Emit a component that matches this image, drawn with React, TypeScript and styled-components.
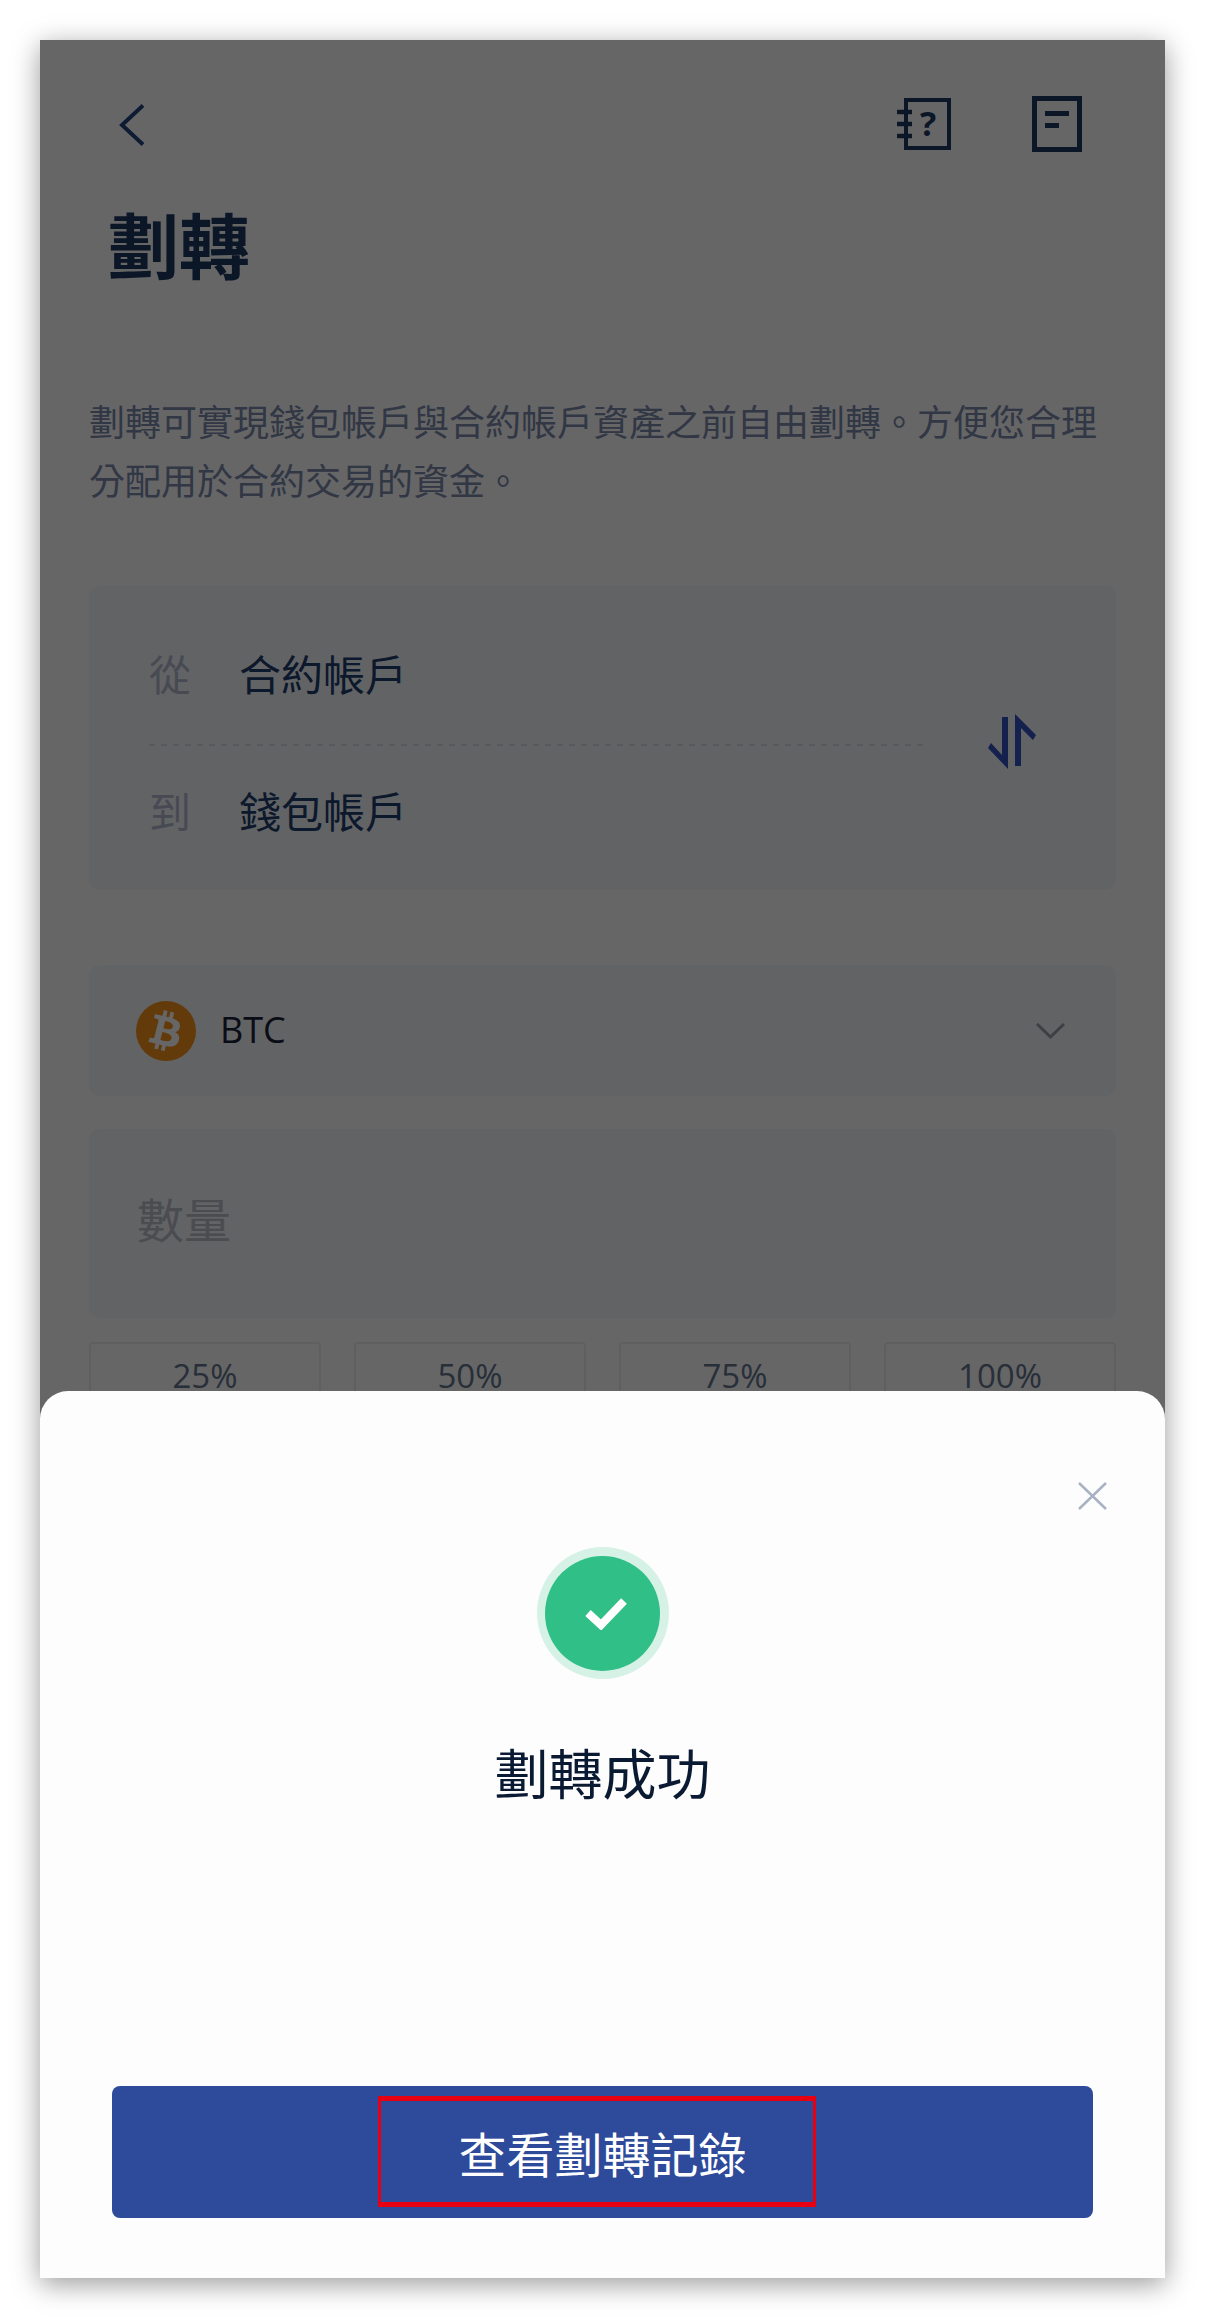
import React from "react";
import styled, { createGlobalStyle } from "styled-components";
import { FaBtc } from "react-icons/fa";

const Global = createGlobalStyle`
  html, body { margin: 0; padding: 0; background: #fff; }
  body { font-family: "Open Sans", "Noto Sans CJK TC", sans-serif; }
`;

const Stage = styled.div`
  width: 1205px;
  height: 2318px;
  padding: 40px;
  box-sizing: border-box;
`;

const Phone = styled.div`
  position: relative;
  height: 2238px;
  background: #fff;
  overflow: hidden;
  padding: 0 49px;
`;

const Shadowed = styled.div`
  box-shadow: 0 6px 26px rgba(0, 0, 0, 0.4);
`;

const TopBar = styled.header`
  display: flex;
  align-items: center;
  justify-content: space-between;
  height: 56px;
  padding: 56px 34px 0 30px;
`;

const BarActions = styled.div`
  display: flex;
  align-items: center;
  gap: 81px;
`;

const PageTitle = styled.h1`
  margin: 48px 0 0 19px;
  font-size: 71px;
  line-height: 84px;
  font-weight: 700;
  color: #1c3763;
  font-family: "Noto Sans CJK TC", sans-serif;
`;

const Intro = styled.p`
  margin: 107px 0 0;
  font-size: 36px;
  line-height: 59px;
  color: #7b89ab;
  font-family: "Noto Sans CJK TC", sans-serif;
`;

const AccountCard = styled.section`
  display: flex;
  align-items: center;
  margin-top: 77px;
  height: 304px;
  box-sizing: border-box;
  background: #f5f7fc;
  border-radius: 10px;
  padding: 6px 80px 0 60px;
`;

const Accounts = styled.div`
  flex: 1;
  margin-right: 65px;
`;

const AccountRow = styled.div`
  display: flex;
  align-items: center;
  gap: 48px;
  height: 68px;
  font-size: 42px;
  font-family: "Noto Sans CJK TC", sans-serif;
`;

const RowDivider = styled.div`
  height: 2px;
  background: repeating-linear-gradient(90deg, #dcdfe6 0 6px, transparent 6px 12px);
  margin: 37px 0 30px;
`;

const RowLabel = styled.span`
  color: #b3b9d0;
`;

const RowValue = styled.span`
  color: #1f3d6c;
`;

const CoinCard = styled.section`
  display: flex;
  align-items: center;
  margin-top: 75px;
  height: 131px;
  background: #f5f7fc;
  border-radius: 10px;
  padding: 0 51px 0 47px;
`;

const CoinBadge = styled.span`
  display: flex;
  align-items: center;
  justify-content: center;
  width: 60px;
  height: 60px;
  border-radius: 50%;
  background: #f7931a;
  color: #fff;
  font-size: 40px;

  svg {
    transform: rotate(14deg);
  }
`;

const CoinName = styled.span`
  flex: 1;
  margin: -2px 0 0 24px;
  font-size: 36px;
  color: #1a2238;
`;

const AmountCard = styled.section`
  display: flex;
  align-items: center;
  margin-top: 33px;
  height: 189px;
  box-sizing: border-box;
  background: #f5f7fc;
  border-radius: 10px;
  padding: 0 49px 12px 48px;
  font-size: 47px;
  color: #b8bdc8;
  font-family: "Noto Sans CJK TC", sans-serif;
`;

const PercentRow = styled.div`
  display: grid;
  grid-template-columns: repeat(4, 232px);
  justify-content: space-between;
  margin-top: 24px;
`;

const PercentButton = styled.div`
  height: 90px;
  box-sizing: border-box;
  border: 2px solid #eceef3;
  border-radius: 4px;
  text-align: center;
  font-size: 33px;
  line-height: 64px;
  color: #64758f;
`;

const Scrim = styled.div`
  position: absolute;
  inset: 0;
  background: rgba(0, 0, 0, 0.6);
`;

const Sheet = styled.div`
  position: absolute;
  left: 0;
  right: 0;
  bottom: 0;
  height: 887px;
  box-sizing: border-box;
  background: #fdfdfd;
  border-radius: 28px 28px 0 0;
  display: flex;
  flex-direction: column;
  align-items: center;
  padding-top: 91px;
`;

const CloseRow = styled.div`
  align-self: stretch;
  display: flex;
  justify-content: flex-end;
  padding-right: 58px;
  height: 28px;
`;

const StatusHalo = styled.div`
  display: flex;
  align-items: center;
  justify-content: center;
  width: 132px;
  height: 132px;
  margin-top: 37px;
  border-radius: 50%;
  background: #d6f2e7;
`;

const StatusDisc = styled.div`
  display: flex;
  align-items: center;
  justify-content: center;
  width: 115px;
  height: 115px;
  box-sizing: border-box;
  padding-left: 6px;
  border-radius: 50%;
  background: #30bf87;
`;

const SheetTitle = styled.h2`
  margin: 57px 0 0;
  font-size: 54px;
  line-height: 72px;
  font-weight: 400;
  color: #0b1a33;
  font-family: "Noto Sans CJK TC", sans-serif;
`;

const RecordButton = styled.button`
  display: flex;
  align-items: center;
  justify-content: center;
  position: relative;
  width: 981px;
  height: 132px;
  margin-top: auto;
  margin-bottom: 60px;
  border: 0;
  border-radius: 8px;
  background: #2d4a9b;
  color: #fff;
  font-size: 48px;
  font-family: "Noto Sans CJK TC", sans-serif;
`;

const Highlight = styled.span`
  position: absolute;
  left: 266px;
  top: 10px;
  width: 438px;
  height: 111px;
  box-sizing: border-box;
  border: solid #e60012;
  border-width: 5px 3px 5px 3px;
`;

const BackIcon = styled.svg`
  margin-top: 2px;
`;

const GuideIcon = () => (
  <svg width="54" height="52" viewBox="0 0 54 52" fill="none">
    <rect x="9" y="2" width="43" height="48" stroke="#1c3763" strokeWidth="4" />
    <path d="M0 14h15M0 26h15M0 38h15" stroke="#1c3763" strokeWidth="4.5" />
    <text x="31" y="38" textAnchor="middle" fontFamily="Open Sans" fontWeight="700" fontSize="34" fill="#1c3763">?</text>
  </svg>
);

const RecordIcon = () => (
  <svg width="50" height="56" viewBox="0 0 50 56" fill="none">
    <rect x="2.5" y="2.5" width="45" height="51" stroke="#1c3763" strokeWidth="5" />
    <path d="M13 17.5h24M13 29.5h14" stroke="#1c3763" strokeWidth="5" />
  </svg>
);

const SwapIcon = () => (
  <svg width="48" height="55" viewBox="0 0 48 55" fill="#3451c4">
    <polygon points="14,3 20,3 20,55 0,34 3,29 14,41" />
    <polygon points="27,52 33,52 33,14 45,26 48,21 27,0" />
  </svg>
);

const ChevronIcon = () => (
  <svg width="29" height="16" viewBox="0 0 29 16" fill="none">
    <path d="M1 1l13.5 13L28 1" stroke="#9a9fab" strokeWidth="3" />
  </svg>
);

const CloseIcon = () => (
  <svg width="29" height="28" viewBox="0 0 29 28" fill="none">
    <path d="M1 1l27 26M28 1 1 27" stroke="#a9b2c4" strokeWidth="2.5" />
  </svg>
);

const CheckIcon = () => (
  <svg width="42" height="33" viewBox="0 0 42 33" fill="none">
    <path d="M3 16l13 12L39 4" stroke="#fff" strokeWidth="8" />
  </svg>
);

export default function App() {
  return (
    <>
      <Global />
      <Stage>
        <Shadowed>
          <Phone>
            <TopBar>
              <BackIcon width="25" height="42" viewBox="0 0 25 42" fill="none">
                <path d="M24 1.5 3 21l21 19.5" stroke="#25477f" strokeWidth="4" />
              </BackIcon>
              <BarActions>
                <GuideIcon />
                <RecordIcon />
              </BarActions>
            </TopBar>
            <PageTitle>劃轉</PageTitle>
            <Intro>
              劃轉可實現錢包帳戶與合約帳戶資產之前自由劃轉。方便您合理分配用於合約交易的資金。
            </Intro>
            <AccountCard>
              <Accounts>
                <AccountRow>
                  <RowLabel>從</RowLabel>
                  <RowValue>合約帳戶</RowValue>
                </AccountRow>
                <RowDivider />
                <AccountRow>
                  <RowLabel>到</RowLabel>
                  <RowValue>錢包帳戶</RowValue>
                </AccountRow>
              </Accounts>
              <SwapIcon />
            </AccountCard>
            <CoinCard>
              <CoinBadge>
                <FaBtc />
              </CoinBadge>
              <CoinName>BTC</CoinName>
              <ChevronIcon />
            </CoinCard>
            <AmountCard>數量</AmountCard>
            <PercentRow>
              {["25%", "50%", "75%", "100%"].map((p) => (
                <PercentButton key={p}>{p}</PercentButton>
              ))}
            </PercentRow>
            <Scrim />
            <Sheet>
              <CloseRow>
                <CloseIcon />
              </CloseRow>
              <StatusHalo>
                <StatusDisc>
                  <CheckIcon />
                </StatusDisc>
              </StatusHalo>
              <SheetTitle>劃轉成功</SheetTitle>
              <RecordButton>
                查看劃轉記錄
                <Highlight />
              </RecordButton>
            </Sheet>
          </Phone>
        </Shadowed>
      </Stage>
    </>
  );
}
